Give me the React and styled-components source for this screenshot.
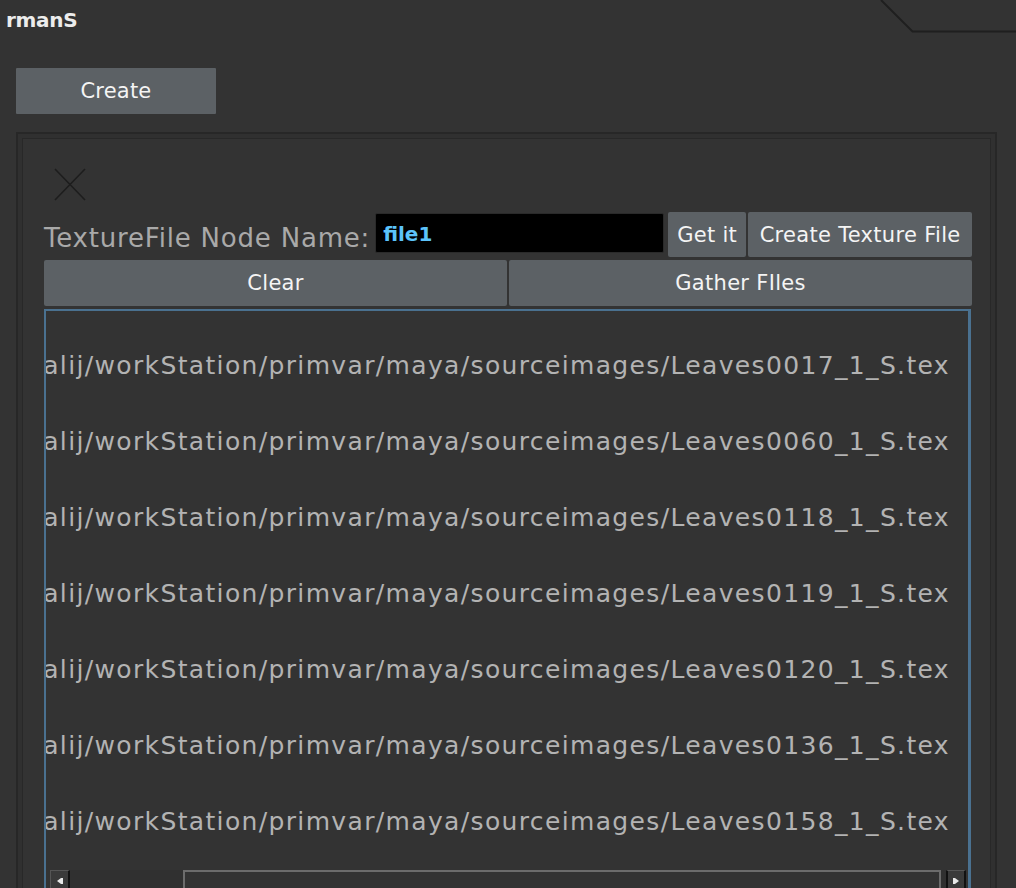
import React from "react";
import styled, { createGlobalStyle } from "styled-components";

const GlobalStyle = createGlobalStyle`
  html, body {
    margin: 0;
    padding: 0;
    background: #333333;
    overflow: hidden;
  }
  body {
    font-family: "DejaVu Sans", "Liberation Sans", sans-serif;
  }
`;

const Page = styled.div`
  width: 1016px;
  height: 888px;
  overflow: hidden;
  background: #333333;
  display: flex;
  flex-direction: column;
`;

const Header = styled.div`
  height: 32px;
  display: flex;
  justify-content: space-between;
  align-items: flex-start;
`;

const Title = styled.div`
  padding: 8px 0 0 6px;
  font-size: 20px;
  font-weight: bold;
  color: #ececec;
  letter-spacing: -0.3px;
`;

const TabCorner = styled.svg`
  display: block;
`;

const CreateButton = styled.button`
  margin: 36px 0 0 16px;
  width: 200px;
  height: 46px;
  flex: none;
  border: none;
  border-radius: 1px;
  background: #5c6165;
  color: #f4f4f4;
  font-family: inherit;
  font-size: 21px;
  letter-spacing: 0.2px;
  padding: 0;
`;

const OuterFrame = styled.div`
  margin: 18px 0 0 16px;
  width: 981px;
  flex: 1;
  box-sizing: border-box;
  border: 2px solid #272727;
  border-bottom: none;
  padding: 4px 4px 0 4px;
  background: #303030;
`;

const InnerFrame = styled.div`
  height: 100%;
  box-sizing: border-box;
  border: 1px solid #282828;
  border-bottom: none;
  background: #333333;
  padding: 29px 18px 0 21px;
  display: flex;
  flex-direction: column;
`;

const CloseIcon = styled.svg`
  display: block;
  margin-left: 10px;
  flex: none;
`;

const FieldRow = styled.div`
  margin-top: 11px;
  display: flex;
  align-items: stretch;
  height: 45px;
  gap: 2px;
  flex: none;
`;

const Label = styled.div`
  font-size: 26px;
  line-height: 30px;
  letter-spacing: 0.8px;
  color: #a9a9a9;
  align-self: flex-end;
  padding-bottom: 4px;
  margin-right: 3px;
  white-space: nowrap;
`;

const NameInput = styled.div`
  width: 289px;
  height: 40px;
  box-sizing: border-box;
  margin-top: 1px;
  background: #000;
  border: 1px solid #2a2a2a;
  border-radius: 2px;
  color: #5cc3fb;
  font-weight: bold;
  font-size: 20px;
  display: flex;
  align-items: center;
  padding: 2px 0 0 7px;
  margin-right: 2px;
`;

const ToolButton = styled.button`
  flex: ${(p) => (p.$grow ? 1 : "none")};
  width: ${(p) => (p.$w ? `${p.$w}px` : "auto")};
  border: none;
  border-radius: 2px;
  background: #5c6165;
  color: #f4f4f4;
  font-family: inherit;
  font-size: 21px;
  letter-spacing: 0.3px;
  padding: 0;
  white-space: nowrap;
`;

const ButtonRow = styled.div`
  margin-top: 3px;
  display: flex;
  height: 46px;
  gap: 2px;
  flex: none;
`;

const List = styled.div`
  margin-top: 3px;
  width: 927px;
  box-sizing: border-box;
  border: 2px solid #4a7190;
  border-right-width: 3px;
  border-bottom: none;
  display: flex;
  flex-direction: column;
  flex: none;
`;

const Rows = styled.div`
  height: 559px;
  padding-top: 16px;
  box-sizing: border-box;
  overflow: hidden;
`;

const Row = styled.div`
  height: 76px;
  display: flex;
  align-items: center;
  justify-content: flex-end;
  overflow: hidden;
  white-space: nowrap;
  padding-right: 18px;
  font-size: 25px;
  letter-spacing: 1.35px;
  color: #b3b3b3;
`;

const ScrollBar = styled.div`
  display: flex;
  align-items: stretch;
  height: 20px;
  padding: 0 2px 0 4px;
`;

const ArrowBtn = styled.div`
  width: 20px;
  box-sizing: border-box;
  border-top: 1px solid #555;
  border-left: ${(p) => (p.$right ? "2px solid #111" : "1px solid #555")};
  border-right: 2px solid #111;
  background: #3a3a3a;
  display: flex;
  align-items: center;
  justify-content: center;
`;

const Track = styled.div`
  flex: 1;
  display: flex;
  background: #303030;
  padding-left: ${(p) => p.$offset}px;
  padding-right: 5px;
`;

const Thumb = styled.div`
  flex: 1;
  border: 2px solid #6c6c6c;
  border-bottom: none;
  background: #333;
`;

const paths = ["0017", "0060", "0118", "0119", "0120", "0136", "0158"];

export default function App() {
  return (
    <>
      <GlobalStyle />
      <Page>
        <Header>
          <Title>rmanS</Title>
          <TabCorner width="136" height="33" viewBox="0 0 136 33">
            <path d="M1 0 L32.5 31.5 L136 31.5" fill="none" stroke="#1f1f1f" strokeWidth="2" />
          </TabCorner>
        </Header>
        <CreateButton>Create</CreateButton>
        <OuterFrame>
          <InnerFrame>
            <CloseIcon width="32" height="33" viewBox="0 0 32 33">
              <path d="M1 1 L31 32 M31 1 L1 32" stroke="#1d1d1d" strokeWidth="1.6" fill="none" />
            </CloseIcon>
            <FieldRow>
              <Label>TextureFile Node Name:</Label>
              <NameInput>file1</NameInput>
              <ToolButton $w={78}>Get it</ToolButton>
              <ToolButton $grow>Create Texture File</ToolButton>
            </FieldRow>
            <ButtonRow>
              <ToolButton $grow>Clear</ToolButton>
              <ToolButton $grow>Gather FIles</ToolButton>
            </ButtonRow>
            <List>
              <Rows>
                {paths.map((n) => (
                  <Row key={n}>
                    {`/Users/khalij/workStation/primvar/maya/sourceimages/Leaves${n}_1_S.tex`}
                  </Row>
                ))}
              </Rows>
              <ScrollBar>
                <ArrowBtn>
                  <svg width="8" height="8" viewBox="0 0 8 8">
                    <path d="M1 4 L5 1 L7 1 L7 7 L5 7 Z" fill="#e8e8e8" />
                  </svg>
                </ArrowBtn>
                <Track $offset={113}>
                  <Thumb />
                </Track>
                <ArrowBtn $right>
                  <svg width="8" height="8" viewBox="0 0 8 8">
                    <path d="M7 4 L3 1 L1 1 L1 7 L3 7 Z" fill="#e8e8e8" />
                  </svg>
                </ArrowBtn>
              </ScrollBar>
            </List>
          </InnerFrame>
        </OuterFrame>
      </Page>
    </>
  );
}
